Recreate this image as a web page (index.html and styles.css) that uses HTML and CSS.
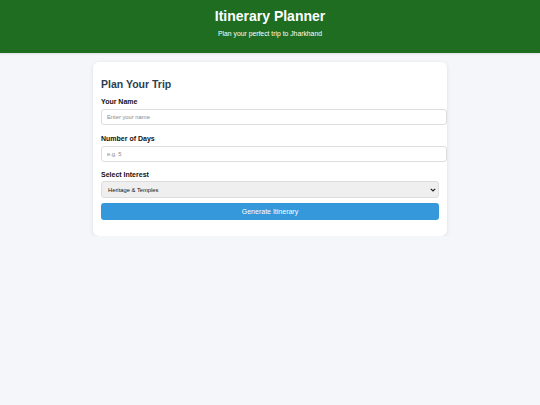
FILE: index.html
```html
<!DOCTYPE html>
<html lang="en">
<head>
  <meta charset="UTF-8">
  <title>Itinerary Planner</title>
  <link rel="stylesheet" href="styles.css">
</head>
<body>
  <header class="top">
    <h1>Itinerary Planner</h1>
    <p>Plan your perfect trip to Jharkhand</p>
  </header>

  <div class="card">
    <h2>Plan Your Trip</h2>
    <label for="name">Your Name</label>
    <input type="text" id="name" placeholder="Enter your name">

    <label for="days">Number of Days</label>
    <input type="number" id="days" placeholder="e.g. 5">

    <label for="interest">Select Interest</label>
    <div class="pick">
      <select id="interest">
        <option>Heritage &amp; Temples</option>
        <option>Nature &amp; Waterfalls</option>
        <option>Wildlife</option>
      </select>
      <svg class="arrow" width="6" height="4" viewBox="0 0 6 4">
        <path d="M0.8 0.8 L3 3 L5.2 0.8" fill="none" stroke="#222" stroke-width="1.2"/>
      </svg>
    </div>

    <button class="go">Generate Itinerary</button>
  </div>
</body>
</html>
```

FILE: styles.css
```css
body {
  margin: 0;
  font-family: "Liberation Sans", Arial, sans-serif;
  background-color: #f4f6f9;
}

.top {
  background-color: #1e6d21;
  color: #fff;
  text-align: center;
  height: 53px;
  padding-top: 8px;
  box-sizing: border-box;
  box-shadow: 0 1px 2px rgba(0,0,0,0.1);
}
.top h1 {
  margin: 0;
  font-size: 14px;
  line-height: 17px;
}
.top p {
  margin: 5px 0 0;
  font-size: 6.8px;
  line-height: 8px;
}

.card {
  width: 338px;
  margin: 9px auto 0;
  background: #fff;
  padding: 8px 8px 16px;
  border-radius: 6px;
  box-shadow: 0 1px 4px rgba(0,0,0,0.1);
}
.card h2 {
  margin: 8px 0 8px;
  font-size: 10.5px;
  line-height: 12px;
  color: #2c3e50;
}
.card label {
  display: block;
  font-size: 7px;
  line-height: 8px;
  font-weight: bold;
  color: #111;
  margin-bottom: 3px;
}
.card input {
  display: block;
  box-sizing: border-box;
  width: 346px;
  height: 16px;
  padding: 0 5px;
  margin: 0 0 9.5px;
  border: 1px solid #ddd;
  border-radius: 3px;
  font-size: 5.8px;
  font-family: inherit;
  outline: none;
}
.card input::placeholder {
  color: #888;
}
.pick {
  position: relative;
  margin: -1px 0 5px;
}
.pick select {
  display: block;
  width: 100%;
  height: 17px;
  padding: 0 6px;
  border: 1px solid #ddd;
  border-radius: 3px;
  background: #efefef;
  color: #111;
  font-size: 5.8px;
  font-family: inherit;
  appearance: none;
  -webkit-appearance: none;
}
.pick .arrow {
  position: absolute;
  right: 3px;
  top: 7px;
}
.go {
  display: block;
  width: 100%;
  height: 17px;
  border: none;
  border-radius: 3px;
  background-color: #3498db;
  color: #fff;
  font-size: 7px;
  font-family: inherit;
}
```
